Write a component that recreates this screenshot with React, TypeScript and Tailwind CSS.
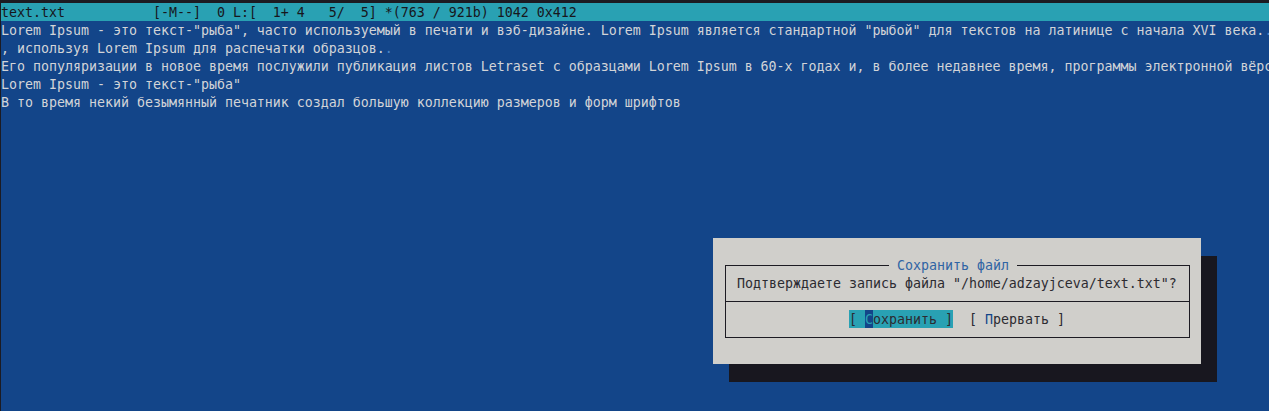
const status = "text.txt           [-M--]  0 L:[  1+ 4   5/  5] *(763 / 921b) 1042 0x412";

const lines: Array<{ text: string; mark?: boolean }> = [
  {
    text: 'Lorem Ipsum - это текст-"рыба", часто используемый в печати и вэб-дизайне. Lorem Ipsum является стандартной "рыбой" для текстов на латинице с начала XVI века.',
    mark: true,
  },
  { text: ", используя Lorem Ipsum для распечатки образцов.", mark: true },
  {
    text: "Его популяризации в новое время послужили публикация листов Letraset с образцами Lorem Ipsum в 60-х годах и, в более недавнее время, программы электронной вёрстки типа Aldus PageMaker",
  },
  { text: 'Lorem Ipsum - это текст-"рыба"' },
  { text: "В то время некий безымянный печатник создал большую коллекцию размеров и форм шрифтов" },
];

export default function App() {
  // строки по 18px, leading 20px опускает текст на 1px как в терминале
  return (
    <div className="relative h-[411px] w-[1269px] overflow-hidden bg-[#1c1b22] pt-[3px] pl-px font-['DejaVu_Sans_Mono',monospace] text-[13.29px] leading-[20px]">
      <div className="h-full bg-[#134589]">
        {/* строка состояния */}
        <div className="h-[18px] overflow-hidden whitespace-pre bg-[#29a1b3] text-[#17161c]">{status}</div>

        {lines.map((line, i) => (
          <div key={i} className="h-[18px] overflow-hidden whitespace-pre text-[#d2d4d8]">
            {line.text}
            {line.mark && <span className="text-[#4f86c6]">.</span>}
          </div>
        ))}
      </div>

      {/* тень диалога */}
      <div className="absolute left-[729px] top-[256px] h-[126px] w-[488px] bg-[#18171f]" />

      {/* диалог сохранения */}
      <div className="absolute left-[713px] top-[238px] h-[126px] w-[488px] bg-[#d0cfcb] pl-[12px] pt-[27px] text-[#2c2b31]">
        <div className="relative w-[465px] border border-[#1c1b22]">
          <div className="absolute left-[163px] top-[-10px] h-[18px] whitespace-pre bg-[#d0cfcb] text-[#2f64a4]">
            {" Сохранить файл "}
          </div>
          <div className="pt-[8px] pb-[9px] pl-[11px]">
            <div className="h-[18px] whitespace-pre">Подтверждаете запись файла "/home/adzayjceva/text.txt"?</div>
          </div>
          <div className="border-t border-[#1c1b22] pt-[8px] pb-[9px] pl-[123px]">
            <div className="flex h-[18px] whitespace-pre">
              <span className="inline-block h-[18px] bg-[#29a1b3]">
                {"[ "}
                <span className="inline-block h-[18px] bg-[#134589] text-[#29a1b3]">С</span>
                {"охранить ]"}
              </span>
              <span>{"  [ "}</span>
              <span className="text-[#134589]">П</span>
              <span>{"рервать ]"}</span>
            </div>
          </div>
        </div>
      </div>
    </div>
  );
}
